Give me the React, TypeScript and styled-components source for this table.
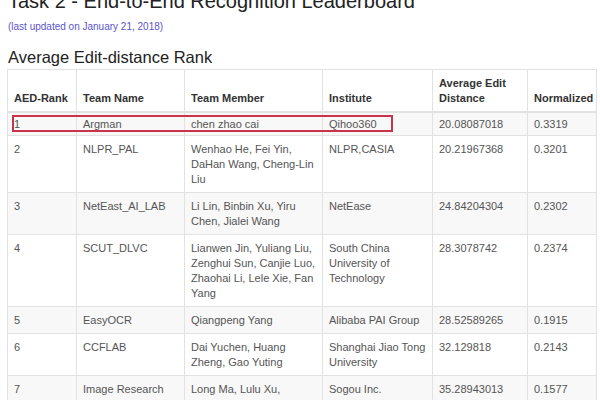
import React from 'react';
import styled, { createGlobalStyle } from 'styled-components';

const GlobalStyle = createGlobalStyle`
  html, body {
    margin: 0;
    padding: 0;
    background: #ffffff;
    overflow: hidden;
  }
  body {
    font-family: "Liberation Sans", Arial, sans-serif;
  }
`;

const Page = styled.div`
  width: 600px;
  height: 400px;
  overflow: hidden;
  padding: 0 0 0 7px;
  box-sizing: border-box;
  display: flex;
  flex-direction: column;
`;

const Title = styled.h1`
  margin: -9px 0 0 1px;
  font-size: 20px;
  line-height: 20px;
  font-weight: 400;
  color: #222;
`;

const Updated = styled.p`
  margin: 10px 0 0 1px;
  font-size: 10px;
  line-height: 12px;
  color: #5a55d0;
`;

const Section = styled.h2`
  margin: 15px 0 0 1px;
  font-size: 16.5px;
  line-height: 18px;
  font-weight: 400;
  color: #222;
`;

const TableWrap = styled.div`
  position: relative;
  margin-top: 3px;
  width: 589px;
`;

const Table = styled.table`
  border-collapse: collapse;
  table-layout: fixed;
  width: 589px;
  font-size: 11px;
  line-height: 15px;
`;

const Th = styled.th<{ $w: number }>`
  width: ${(p) => p.$w}px;
  box-sizing: border-box;
  text-align: left;
  vertical-align: bottom;
  font-weight: 700;
  color: #333;
  padding: 6px 6px 5px 6px;
  border: 1px solid #e2e2e2;
  border-bottom: 2px solid #e2e2e2;
  white-space: nowrap;
`;

const Tr = styled.tr<{ $striped: boolean }>`
  background: ${(p) => (p.$striped ? '#f8f8f8' : '#ffffff')};
`;

const Td = styled.td<{ $compact?: boolean; $lines?: number }>`
  vertical-align: top;
  color: #555;
  padding: ${(p) => (p.$compact ? '4px 6px 3px' : '6px 6px 5px')};
  border: 1px solid #e2e2e2;
  white-space: nowrap;
  overflow: hidden;
`;

const Highlight = styled.div`
  position: absolute;
  left: 5px;
  top: 46px;
  width: 381px;
  height: 17px;
  border: 2px solid #c8344a;
  box-sizing: border-box;
  pointer-events: none;
`;

type Row = {
  rank: string;
  team: string[];
  members: string[];
  institute: string[];
  dist: string;
  norm: string;
};

const rows: Row[] = [
  { rank: '1', team: ['Argman'], members: ['chen zhao cai'], institute: ['Qihoo360'], dist: '20.08087018', norm: '0.3319' },
  {
    rank: '2',
    team: ['NLPR_PAL'],
    members: ['Wenhao He, Fei Yin,', 'DaHan Wang, Cheng-Lin', 'Liu'],
    institute: ['NLPR,CASIA'],
    dist: '20.21967368',
    norm: '0.3201',
  },
  {
    rank: '3',
    team: ['NetEast_AI_LAB'],
    members: ['Li Lin, Binbin Xu, Yiru', 'Chen, Jialei Wang'],
    institute: ['NetEase'],
    dist: '24.84204304',
    norm: '0.2302',
  },
  {
    rank: '4',
    team: ['SCUT_DLVC'],
    members: ['Lianwen Jin, Yuliang Liu,', 'Zenghui Sun, Canjie Luo,', 'Zhaohai Li, Lele Xie, Fan', 'Yang'],
    institute: ['South China', 'University of', 'Technology'],
    dist: '28.3078742',
    norm: '0.2374',
  },
  { rank: '5', team: ['EasyOCR'], members: ['Qiangpeng Yang'], institute: ['Alibaba PAI Group'], dist: '28.52589265', norm: '0.1915' },
  {
    rank: '6',
    team: ['CCFLAB'],
    members: ['Dai Yuchen, Huang', 'Zheng, Gao Yuting'],
    institute: ['Shanghai Jiao Tong', 'University'],
    dist: '32.129818',
    norm: '0.2143',
  },
  {
    rank: '7',
    team: ['Image Research', 'Team'],
    members: ['Long Ma, Lulu Xu,', 'Shenghui Xu'],
    institute: ['Sogou Inc.'],
    dist: '35.28943013',
    norm: '0.1577',
  },
];

const Lines: React.FC<{ lines: string[] }> = ({ lines }) => (
  <>
    {lines.map((l, i) => (
      <React.Fragment key={i}>
        {i > 0 && <br />}
        {l}
      </React.Fragment>
    ))}
  </>
);

const App: React.FC = () => {
  return (
    <Page>
      <GlobalStyle />
      <Title>Task 2 - End-to-End Recognition Leaderboard</Title>
      <Updated>(last updated on January 21, 2018)</Updated>
      <Section>Average Edit-distance Rank</Section>
      <TableWrap>
        <Table>
          <thead>
            <tr>
              <Th $w={69}>AED-Rank</Th>
              <Th $w={108}>Team Name</Th>
              <Th $w={138}>Team Member</Th>
              <Th $w={110}>Institute</Th>
              <Th $w={95}>
                Average Edit
                <br />
                Distance
              </Th>
              <Th $w={69}>Normalized</Th>
            </tr>
          </thead>
          <tbody>
            {rows.map((r, i) => (
              <Tr key={r.rank} $striped={i % 2 === 0}>
                <Td $compact={i === 0}>{r.rank}</Td>
                <Td $compact={i === 0}>
                  <Lines lines={r.team} />
                </Td>
                <Td $compact={i === 0}>
                  <Lines lines={r.members} />
                </Td>
                <Td $compact={i === 0}>
                  <Lines lines={r.institute} />
                </Td>
                <Td $compact={i === 0}>{r.dist}</Td>
                <Td $compact={i === 0}>{r.norm}</Td>
              </Tr>
            ))}
          </tbody>
        </Table>
        <Highlight />
      </TableWrap>
    </Page>
  );
};

export default App;
